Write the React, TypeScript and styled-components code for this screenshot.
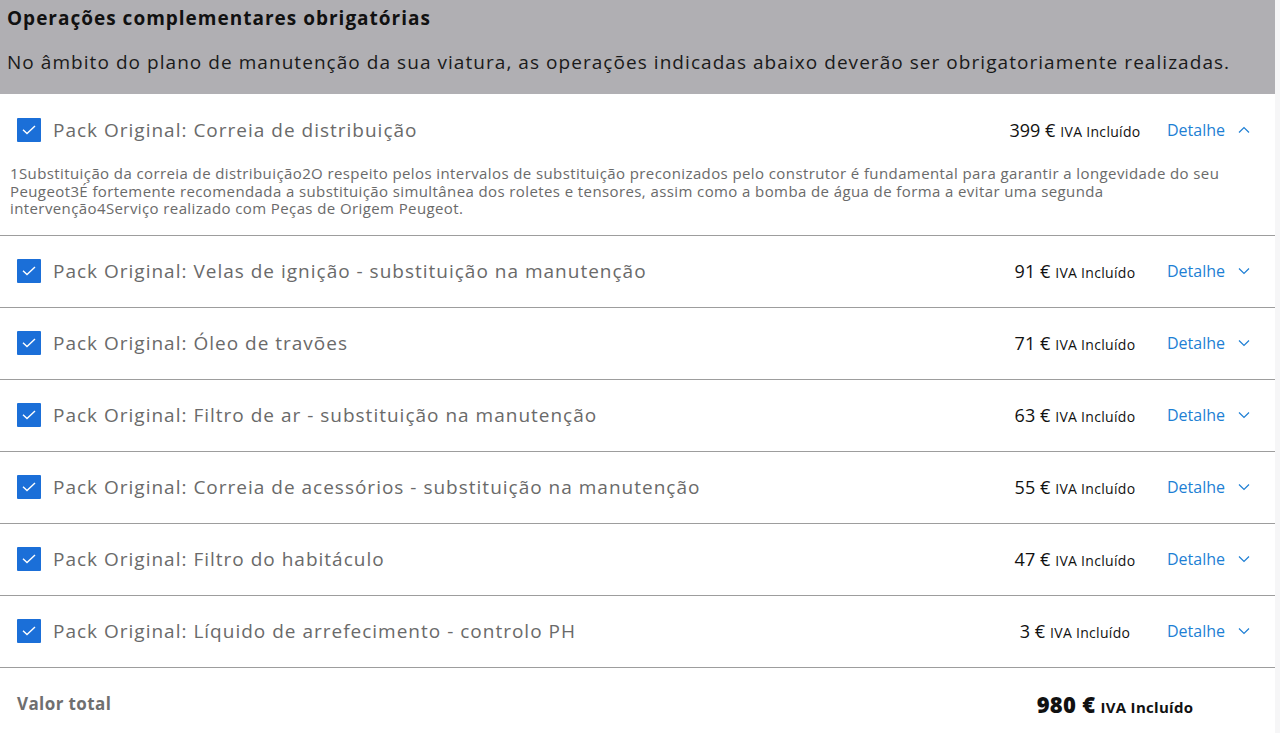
import React from 'react'
import styled, {createGlobalStyle} from 'styled-components'

interface IOperation {
    name: string,
    price: number,
    details?: string
}

const operations: IOperation[] = [
    {
        name: 'Pack Original: Correia de distribuição',
        price: 399,
        details: '1Substituição da correia de distribuição2O respeito pelos intervalos de substituição preconizados pelo construtor é fundamental para garantir a longevidade do seu Peugeot3É fortemente recomendada a substituição simultânea dos roletes e tensores, assim como a bomba de água de forma a evitar uma segunda intervenção4Serviço realizado com Peças de Origem Peugeot.'
    },
    {name: 'Pack Original: Velas de ignição - substituição na manutenção', price: 91},
    {name: 'Pack Original: Óleo de travões', price: 71},
    {name: 'Pack Original: Filtro de ar - substituição na manutenção', price: 63},
    {name: 'Pack Original: Correia de acessórios - substituição na manutenção', price: 55},
    {name: 'Pack Original: Filtro do habitáculo', price: 47},
    {name: 'Pack Original: Líquido de arrefecimento - controlo PH', price: 3},
]

const TOTAL = 980

const GlobalStyle = createGlobalStyle`
    body {
        margin: 0;
        background: #f6f6f7;
        font-family: "Open Sans", "Noto Sans", sans-serif;
        color: #111;
    }
`

const Panel = styled.section`
    width: 1275px;
    min-height: 100vh;
    background: #fff;
`

const Header = styled.header`
    background: #b0afb3;
    padding: 6px 7px 0;
    height: 88px;
`

const Title = styled.h2`
    margin: 0;
    font-size: 19px;
    font-weight: 700;
    line-height: 24px;
    letter-spacing: 1px;
    color: #111;
`

const Intro = styled.p`
    margin: 20px 0 0;
    font-size: 19px;
    line-height: 24px;
    letter-spacing: 1.05px;
    color: #1a1a1a;
`

const Item = styled.div`
    border-bottom: 1.5px solid #9d9d9d;
`

const Row = styled.div`
    display: grid;
    grid-template-columns: 1fr 184px 83px;
    align-items: center;
    height: 71px;
    padding: 0 25px 0 17px;
`

const Label = styled.label`
    display: flex;
    align-items: center;
    gap: 12px;
    font-size: 19px;
    letter-spacing: 1px;
    color: #6a6a6a;
`

const Check = styled.span`
    display: flex;
    align-items: center;
    justify-content: center;
    width: 24px;
    height: 24px;
    background: #1b6fd8;
    border-radius: 1px;
    flex-shrink: 0;
`

const Price = styled.div`
    text-align: center;
    white-space: nowrap;
`

const Amount = styled.span<{ $big?: boolean }>`
    font-size: ${p => p.$big ? '22px' : '18px'};
    font-weight: ${p => p.$big ? 800 : 400};
    letter-spacing: ${p => p.$big ? '0.3px' : '0'};
    color: #111;
`

const Vat = styled.span<{ $big?: boolean }>`
    margin-left: 5px;
    font-size: ${p => p.$big ? '15px' : '14px'};
    font-weight: ${p => p.$big ? 700 : 400};
    letter-spacing: 0.3px;
    color: #111;
`

const DetailToggle = styled.button`
    display: flex;
    align-items: center;
    justify-content: space-between;
    padding: 0;
    border: 0;
    background: none;
    font-family: inherit;
    font-size: 16px;
    color: #1e7fd4;
    cursor: pointer;
`

const Details = styled.p`
    margin: 0;
    padding: 0 30px 17px 10px;
    font-size: 15px;
    line-height: 17.5px;
    letter-spacing: 0.4px;
    color: #6a6a6a;
`

const Footer = styled.div`
    display: grid;
    grid-template-columns: 1fr 240px;
    align-items: center;
    height: 72px;
    padding: 0 40px 0 17px;
`

const TotalLabel = styled.span`
    font-size: 17px;
    font-weight: 700;
    letter-spacing: 0.4px;
    color: #6f6f6f;
`

const Chevron = ({up}: { up: boolean }) => (
    <svg width="12" height="8" viewBox="0 0 12 8" fill="none" stroke="#1e7fd4" strokeWidth="1.2">
        {up ? <path d="M1 6.5 6 1.5l5 5"/> : <path d="M1 1.5l5 5 5-5"/>}
    </svg>
)

const Tick = () => (
    <svg width="14" height="10" viewBox="0 0 14 10" fill="none" stroke="#fff" strokeWidth="1.4">
        <path d="M1 4.8 5 8.6 13 1"/>
    </svg>
)

const OperationItem = ({op, open}: { op: IOperation, open: boolean }) => (
    <Item>
        <Row>
            <Label>
                <Check><Tick/></Check>
                {op.name}
            </Label>
            <Price>
                <Amount>{op.price} €</Amount>
                <Vat>IVA Incluído</Vat>
            </Price>
            <DetailToggle>
                Detalhe
                <Chevron up={open}/>
            </DetailToggle>
        </Row>
        {open && op.details && <Details>{op.details}</Details>}
    </Item>
)

const App = () => (
    <>
        <GlobalStyle/>
        <Panel>
            <Header>
                <Title>Operações complementares obrigatórias</Title>
                <Intro>No âmbito do plano de manutenção da sua viatura, as operações indicadas abaixo deverão ser obrigatoriamente realizadas.</Intro>
            </Header>
            {operations.map((op, i) => (
                <OperationItem key={op.name} op={op} open={i === 0}/>
            ))}
            <Footer>
                <TotalLabel>Valor total</TotalLabel>
                <Price>
                    <Amount $big>{TOTAL} €</Amount>
                    <Vat $big>IVA Incluído</Vat>
                </Price>
            </Footer>
        </Panel>
    </>
)

export default App
